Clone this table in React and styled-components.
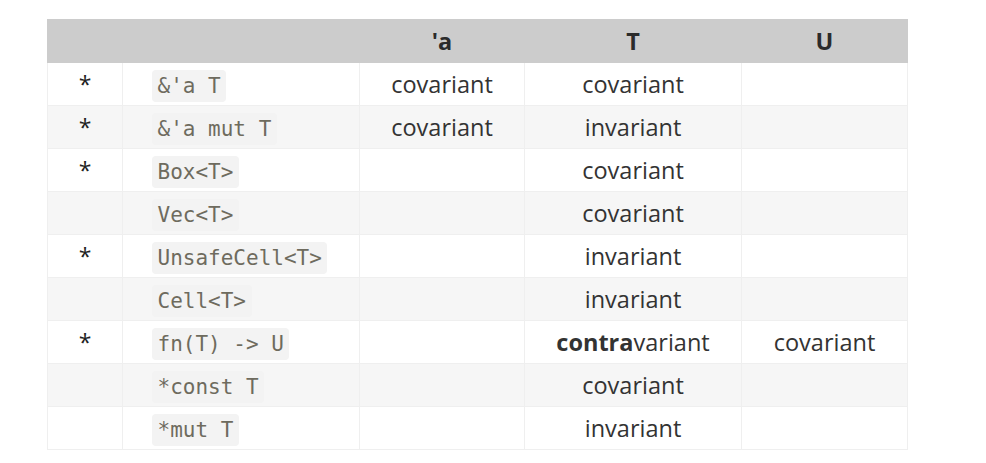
import React from 'react';
import styled, {createGlobalStyle} from 'styled-components';

const GlobalStyle = createGlobalStyle`
  html, body {
    margin: 0;
    padding: 0;
    background: #fff;
  }
  body {
    font-family: "Open Sans", "Liberation Sans", sans-serif;
    color: #333;
  }
`;

const Page = styled.div`
  padding: 19px 0 0 47px;
`;

const Table = styled.table`
  border-collapse: collapse;
  table-layout: fixed;
  width: 860px;
  font-size: 23.5px;
  line-height: 1.45;
`;

const HeadRow = styled.tr`
  background: #ccc;
`;

const Th = styled.th`
  height: 42px;
  padding: 0 20px;
  font-weight: 700;
  text-align: center;
  border: 1px solid #ccc;
  color: #2b2b2b;
`;

const Row = styled.tr`
  background: ${p => (p.$striped ? '#f6f6f6' : '#fff')};
`;

const Td = styled.td`
  height: 42px;
  padding: 0 20px;
  border: 1px solid #efefef;
  text-align: ${p => p.$align || 'center'};
  vertical-align: middle;
  white-space: nowrap;
  ${p => p.$code && 'padding-left: 29px;'}
`;

const Star = styled.span`
  font-size: 23px;
  color: #222;
`;

const Code = styled.code`
  font-family: "DejaVu Sans Mono", "Liberation Mono", monospace;
  font-size: 21px;
  line-height: 24px;
  color: #6e6b5e;
  background: #f3f3f3;
  padding: 4px 5.5px;
  border-radius: 4px;
`;

const Strong = styled.b`
  font-weight: 700;
`;

const rows = [
  {star: true, code: "&'a T", a: 'covariant', t: 'covariant'},
  {star: true, code: "&'a mut T", a: 'covariant', t: 'invariant'},
  {star: true, code: 'Box<T>', t: 'covariant'},
  {code: 'Vec<T>', t: 'covariant'},
  {star: true, code: 'UnsafeCell<T>', t: 'invariant'},
  {code: 'Cell<T>', t: 'invariant'},
  {star: true, code: 'fn(T) -> U', t: 'contra', u: 'covariant'},
  {code: '*const T', t: 'covariant'},
  {code: '*mut T', t: 'invariant'},
];

export default function App() {
  return (
    <Page>
      <GlobalStyle />
      <Table>
        <colgroup>
          <col style={{width: 75}} />
          <col style={{width: 237}} />
          <col style={{width: 165}} />
          <col style={{width: 217}} />
          <col style={{width: 166}} />
        </colgroup>
        <thead>
          <HeadRow>
            <Th></Th>
            <Th></Th>
            <Th>'a</Th>
            <Th>T</Th>
            <Th>U</Th>
          </HeadRow>
        </thead>
        <tbody>
          {rows.map((r, i) => (
            <Row key={i} $striped={i % 2 === 1}>
              <Td>{r.star && <Star>*</Star>}</Td>
              <Td $align="left" $code>
                <Code>{r.code}</Code>
              </Td>
              <Td>{r.a}</Td>
              <Td>
                {r.t === 'contra' ? (
                  <>
                    <Strong>contra</Strong>variant
                  </>
                ) : (
                  r.t
                )}
              </Td>
              <Td>{r.u}</Td>
            </Row>
          ))}
        </tbody>
      </Table>
    </Page>
  );
}
